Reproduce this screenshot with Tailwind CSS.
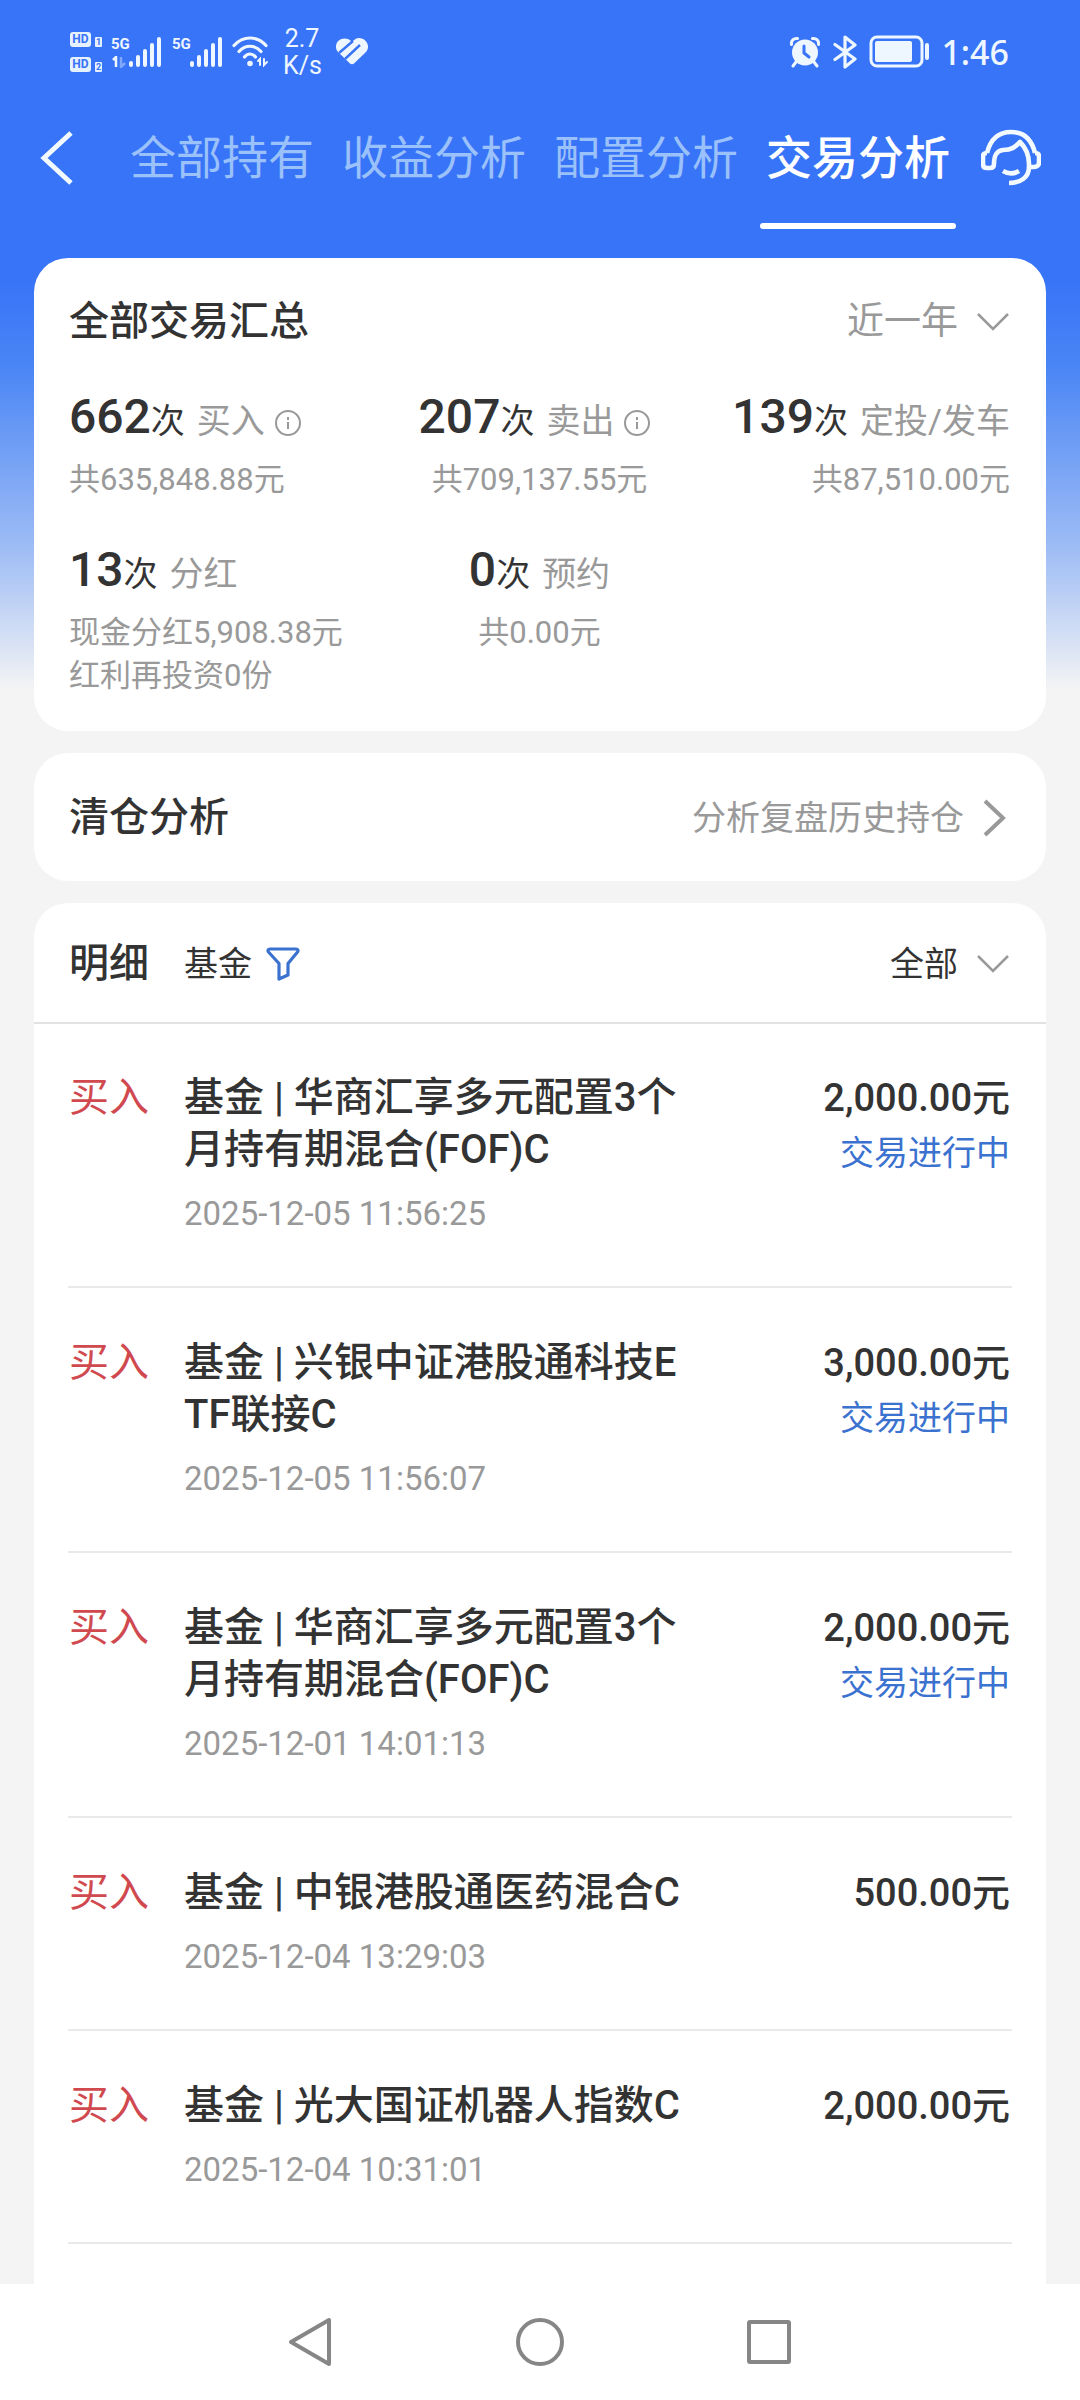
<!DOCTYPE html>
<html lang="zh-CN">
<head>
<meta charset="utf-8">
<meta name="viewport" content="width=device-width, initial-scale=1">
<title>交易分析</title>
<script src="https://cdn.jsdelivr.net/npm/@tailwindcss/browser@4"></script>
</head>
<body class="flex min-h-screen flex-col bg-white font-[Roboto,'Noto_Sans_CJK_SC',sans-serif] text-[#333333]">
<div class="flex flex-1 flex-col bg-[#f4f4f4] bg-[linear-gradient(180deg,#3874f7_0px,#3874f7_280px,#4a85f5_365px,#9fbdf5_550px,#f4f4f4_690px)]">

  <!-- Status bar -->
  <div class="flex h-[104px] items-center justify-between pr-[71px] pl-[70px] text-[#eef6ff]">
    <div class="flex items-center">
      <div class="flex flex-col gap-[10px] text-[12px] leading-[15px] font-bold">
        <div class="flex items-end gap-1"><span class="w-[21px] rounded-[3px] bg-[#e6f1ff] text-center text-[#3874f7]">HD</span><span class="w-[7px] rounded-[1px] bg-[#e6f1ff] text-center text-[9px] leading-[10px] text-[#3874f7]">1</span></div>
        <div class="flex items-end gap-1"><span class="w-[21px] rounded-[3px] bg-[#e6f1ff] text-center text-[#3874f7]">HD</span><span class="w-[7px] rounded-[1px] bg-[#e6f1ff] text-center text-[9px] leading-[10px] text-[#3874f7]">2</span></div>
      </div>
      <div class="ml-[9px] flex h-[32px] items-start">
        <div class="flex w-[18px] flex-col gap-1">
          <span class="text-[15px] leading-[16px] font-bold">5G</span>
          <svg class="h-[12px] w-[16px]" viewBox="0 0 16 12" fill="none" stroke="currentColor" stroke-width="2.5"><path d="M2 4l3-3v10"/><path d="M10 1v10l4-4" opacity=".4"/></svg>
        </div>
        <svg class="h-[32px] w-[33px]" viewBox="0 0 33 32" fill="currentColor"><rect x="0" y="25" width="4" height="6" rx="2"/><rect x="7" y="19" width="4" height="12" rx="2"/><rect x="14" y="13" width="4" height="18" rx="2"/><rect x="21" y="7" width="4" height="24" rx="2"/><rect x="28" y="1" width="4" height="30" rx="2"/></svg>
      </div>
      <div class="ml-[10px] flex h-[32px] items-start">
        <span class="w-[18px] text-[15px] leading-[16px] font-bold">5G</span>
        <svg class="h-[32px] w-[33px]" viewBox="0 0 33 32" fill="currentColor"><rect x="0" y="25" width="4" height="6" rx="2"/><rect x="7" y="19" width="4" height="12" rx="2"/><rect x="14" y="13" width="4" height="18" rx="2"/><rect x="21" y="7" width="4" height="24" rx="2"/><rect x="28" y="1" width="4" height="30" rx="2"/></svg>
      </div>
      <svg class="ml-[9px] h-[32px] w-[38px]" viewBox="0 0 38 32" fill="none" stroke="currentColor" stroke-width="3.2" stroke-linecap="round"><path d="M2 9.500C11-.5 25-.5 34 9.500M7 15.500c6-7 16-7 22 0M12.500 21c3-4 8-4 11 0"/><circle cx="18" cy="27.500" r="2.800" fill="currentColor" stroke="none"/><path d="M26 25l2-2v6M32 23v6l3-3" stroke-width="2"/></svg>
      <div class="ml-[13px] flex w-[38px] flex-col text-center text-[25px] leading-[27px]"><span>2.7</span><span>K/s</span></div>
      <svg class="ml-[14px] h-[30px] w-[34px]" viewBox="0 0 34 30"><path d="M17 5C12-1 1 1 1 10c0 2 1 4 2 5l12 11.500c1 1 3 1 4 0L31 15c5-6 0-14-7-14-3 0-5 2-7 4z" fill="currentColor"/><path d="M18 4L4 16M25 8L10 22" fill="none" stroke="#3874f7" stroke-width="2.400"/></svg>
    </div>
    <div class="flex items-center">
      <svg class="h-[32px] w-[32px]" viewBox="0 0 32 32" fill="none" stroke="currentColor" stroke-width="3" stroke-linecap="round"><circle cx="16" cy="16.500" r="13" fill="currentColor" stroke="none"/><path d="M2.500 8.500C2 4 5 2 8.500 2.500M29.500 8.500C30 4 27 2 23.500 2.500M7 26l-3 4M25 26l3 4"/><path d="M15 10v7l5 4" stroke="#3874f7"/></svg>
      <svg class="ml-[12px] h-[34px] w-[24px]" viewBox="0 0 24 34" fill="none" stroke="currentColor" stroke-width="3.200" stroke-linejoin="round" stroke-linecap="round"><path d="M2 9.500l20 14.500-10 8V2l10 8L2 24.500"/></svg>
      <svg class="ml-[12px] h-[34px] w-[62px]" viewBox="0 0 62 34" fill="none" stroke="currentColor"><rect x="2" y="2" width="51" height="29" rx="6" stroke-width="3"/><rect x="6" y="6" width="37" height="21" rx="2" fill="currentColor" stroke="none"/><path d="M58 10v13" stroke-width="4" stroke-linecap="round"/></svg>
      <span class="ml-[10px] font-['Noto_Sans',sans-serif] text-[34px] leading-[40px] font-medium">1:46</span>
    </div>
  </div>

  <!-- Page tabs -->
  <header class="flex h-[154px] items-start pt-[24px] pr-[39px] pl-[40px] text-[#f3faff]">
    <button type="button" aria-label="返回" class="flex h-[60px] items-center"><svg class="h-[54px] w-[34px]" viewBox="0 0 34 54" fill="none" stroke="currentColor" stroke-width="5"><path d="M31 2L4 27l27 25"/></svg></button>
    <nav class="mr-[31px] ml-auto flex gap-[28px] text-[46px] leading-[60px] text-[#9bc1fb]">
      <a href="#">全部持有</a>
      <a href="#">收益分析</a>
      <a href="#">配置分析</a>
      <a href="#" aria-current="page" class="flex flex-col font-medium text-white">交易分析<span class="-mx-[6px] mt-[35px] h-[6px] rounded-full bg-white"></span></a>
    </nav>
    <button type="button" aria-label="客服" class="flex h-[60px] items-center"><svg class="h-[60px] w-[60px]" viewBox="0 0 60 60" fill="none" stroke="currentColor" stroke-width="4.600" stroke-linejoin="round"><path d="M6 25C10 9 20 4 30 4s20 5 24 21"/><path d="M13 36c0-8 2-13 9-14 9 0 12-3 17-8 6 6 9 12 9 22v3h5c3 0 5-2 5-4V28c0-2-2-3-4-3"/><path d="M6 25c-2 0-4 1-4 3v8c0 3 2 4 4 4h3c3 0 4-2 4-4"/><path d="M48 39c0 10-8 16-20 16"/><path d="M22 43c5 3 11 3 16 0"/></svg></button>
  </header>

  <main class="flex flex-1 flex-col gap-[22px] px-[34px]">
    <!-- Summary -->
    <section class="rounded-[34px] bg-white pt-[34px] pr-[36px] pb-[34px] pl-[35px]">
      <div class="flex items-center justify-between leading-[60px]">
        <h2 class="text-[40px] font-medium">全部交易汇总</h2>
        <div class="flex items-center gap-[18px]">
          <select aria-label="时间范围" class="appearance-none text-[37px] leading-[60px] text-[#999999]"><option>近一年</option></select>
          <svg class="h-[20px] w-[34px]" viewBox="0 0 34 20" fill="none" stroke="#999" stroke-width="2.500"><path d="M2 2l15 15L32 2"/></svg>
        </div>
      </div>
      <dl class="mt-[35px] grid grid-cols-3 gap-y-[39px] text-[31px] leading-[43px] text-[#999999]">
        <div>
          <dt class="flex items-baseline text-[34px] leading-[60px]"><span class="text-[48px] font-medium text-[#333333]">662</span><span class="mr-[12px] text-[#333333]">次</span>买入<svg class="ml-[10px] h-[26px] w-[26px] translate-y-[3px]" viewBox="0 0 26 26" fill="none" stroke="currentColor" stroke-width="2"><circle cx="13" cy="13" r="12"/><path d="M13 7v3M13 12v7"/></svg></dt>
          <dd class="mt-[7px]">共635,848.88元</dd>
        </div>
        <div class="flex flex-col items-center">
          <dt class="flex items-baseline pr-[10px] text-[34px] leading-[60px]"><span class="text-[48px] font-medium text-[#333333]">207</span><span class="mr-[12px] text-[#333333]">次</span>卖出<svg class="ml-[10px] h-[26px] w-[26px] translate-y-[3px]" viewBox="0 0 26 26" fill="none" stroke="currentColor" stroke-width="2"><circle cx="13" cy="13" r="12"/><path d="M13 7v3M13 12v7"/></svg></dt>
          <dd class="mt-[7px]">共709,137.55元</dd>
        </div>
        <div class="flex flex-col items-end">
          <dt class="flex items-baseline text-[34px] leading-[60px] whitespace-nowrap"><span class="text-[48px] font-medium text-[#333333]">139</span><span class="mr-[12px] text-[#333333]">次</span>定投/发车</dt>
          <dd class="mt-[7px]">共87,510.00元</dd>
        </div>
        <div>
          <dt class="flex items-baseline text-[34px] leading-[60px]"><span class="text-[48px] font-medium text-[#333333]">13</span><span class="mr-[12px] text-[#333333]">次</span>分红</dt>
          <dd class="mt-[7px]">现金分红5,908.38元<br>红利再投资0份</dd>
        </div>
        <div class="flex flex-col items-center">
          <dt class="flex items-baseline text-[34px] leading-[60px]"><span class="text-[48px] font-medium text-[#333333]">0</span><span class="mr-[12px] text-[#333333]">次</span>预约</dt>
          <dd class="mt-[7px]">共0.00元</dd>
        </div>
      </dl>
    </section>

    <!-- Closed positions -->
    <a href="#" class="flex h-[128px] items-center justify-between rounded-[34px] bg-white pt-[2px] pr-[36px] pl-[35px]">
      <span class="text-[40px] leading-[60px] font-medium">清仓分析</span>
      <span class="flex items-center gap-[18px] text-[34px] leading-[60px] text-[#999999]">分析复盘历史持仓<svg class="h-[38px] w-[28px]" viewBox="0 0 28 38" fill="none" stroke="currentColor" stroke-width="4"><path d="M3 2l18 17L3 36"/></svg></span>
    </a>

    <!-- Transactions -->
    <section class="flex-1 rounded-t-[34px] bg-white">
      <div class="flex h-[121px] items-center border-b-2 border-[#e2e2e2] pt-[2px] pr-[36px] pl-[35px]">
        <h2 class="text-[40px] leading-[60px] font-medium">明细</h2>
        <button type="button" class="ml-[35px] flex items-center gap-[14px] text-[34px] leading-[60px]">基金<svg class="h-[34px] w-[34px]" viewBox="0 0 34 34" fill="none" stroke="#3b72d0" stroke-width="3.200" stroke-linejoin="round"><path d="M4 2h26c2 0 2.500 1.500 1.500 3L22 16.500V28l-9 4V16.500L2.500 5C1.500 3.500 2 2 4 2z"/></svg></button>
        <div class="ml-auto flex items-center gap-[18px]">
          <select aria-label="交易类型" class="appearance-none text-[34px] leading-[60px]"><option>全部</option></select>
          <svg class="h-[20px] w-[34px]" viewBox="0 0 34 20" fill="none" stroke="#999" stroke-width="2.500"><path d="M2 2l15 15L32 2"/></svg>
        </div>
      </div>
      <ul class="px-[34px] text-[40px] leading-[52px]">
        <li class="flex border-b-2 border-[#e9e9e9] pt-[48px] pr-[2px] pb-[52px] pl-px">
          <span class="w-[115px] text-[#d0494f]">买入</span>
          <div class="w-[510px]"><h3 class="font-medium">基金 | 华商汇享多元配置3个<br>月持有期混合(FOF)C</h3><time class="mt-[18px] block text-[33px] leading-[40px] text-[#999999]">2025-12-05 11:56:25</time></div>
          <div class="ml-auto text-right"><p class="text-[38px] font-medium">2,000.00元</p><p class="mt-[3px] text-[34px] text-[#3b72d0]">交易进行中</p></div>
        </li>
        <li class="flex border-b-2 border-[#e9e9e9] pt-[49px] pr-[2px] pb-[52px] pl-px">
          <span class="w-[115px] text-[#d0494f]">买入</span>
          <div class="w-[510px]"><h3 class="font-medium">基金 | 兴银中证港股通科技E<br>TF联接C</h3><time class="mt-[18px] block text-[33px] leading-[40px] text-[#999999]">2025-12-05 11:56:07</time></div>
          <div class="ml-auto text-right"><p class="text-[38px] font-medium">3,000.00元</p><p class="mt-[3px] text-[34px] text-[#3b72d0]">交易进行中</p></div>
        </li>
        <li class="flex border-b-2 border-[#e9e9e9] pt-[49px] pr-[2px] pb-[52px] pl-px">
          <span class="w-[115px] text-[#d0494f]">买入</span>
          <div class="w-[510px]"><h3 class="font-medium">基金 | 华商汇享多元配置3个<br>月持有期混合(FOF)C</h3><time class="mt-[18px] block text-[33px] leading-[40px] text-[#999999]">2025-12-01 14:01:13</time></div>
          <div class="ml-auto text-right"><p class="text-[38px] font-medium">2,000.00元</p><p class="mt-[3px] text-[34px] text-[#3b72d0]">交易进行中</p></div>
        </li>
        <li class="flex border-b-2 border-[#e9e9e9] pt-[49px] pr-[2px] pb-[52px] pl-px">
          <span class="w-[115px] text-[#d0494f]">买入</span>
          <div class="w-[510px]"><h3 class="font-medium">基金 | 中银港股通医药混合C</h3><time class="mt-[18px] block text-[33px] leading-[40px] text-[#999999]">2025-12-04 13:29:03</time></div>
          <p class="ml-auto text-right text-[38px] font-medium">500.00元</p>
        </li>
        <li class="flex border-b-2 border-[#e9e9e9] pt-[49px] pr-[2px] pb-[52px] pl-px">
          <span class="w-[115px] text-[#d0494f]">买入</span>
          <div class="w-[510px]"><h3 class="font-medium">基金 | 光大国证机器人指数C</h3><time class="mt-[18px] block text-[33px] leading-[40px] text-[#999999]">2025-12-04 10:31:01</time></div>
          <p class="ml-auto text-right text-[38px] font-medium">2,000.00元</p>
        </li>
      </ul>
    </section>
  </main>
</div>

<!-- System navigation -->
<nav class="flex h-[116px] items-center justify-center gap-[180px] text-[#868686]">
  <button type="button" aria-label="返回"><svg class="h-[50px] w-[50px]" viewBox="0 0 50 50" fill="none" stroke="currentColor" stroke-width="4" stroke-linejoin="round"><path d="M44 3v44L6 25z"/></svg></button>
  <button type="button" aria-label="主屏幕"><svg class="h-[50px] w-[50px]" viewBox="0 0 50 50" fill="none" stroke="currentColor" stroke-width="4"><circle cx="25" cy="25" r="22"/></svg></button>
  <button type="button" aria-label="最近任务"><svg class="h-[50px] w-[50px]" viewBox="0 0 50 50" fill="none" stroke="currentColor" stroke-width="4"><rect x="4" y="5" width="40" height="40" rx="1"/></svg></button>
</nav>
</body>
</html>
